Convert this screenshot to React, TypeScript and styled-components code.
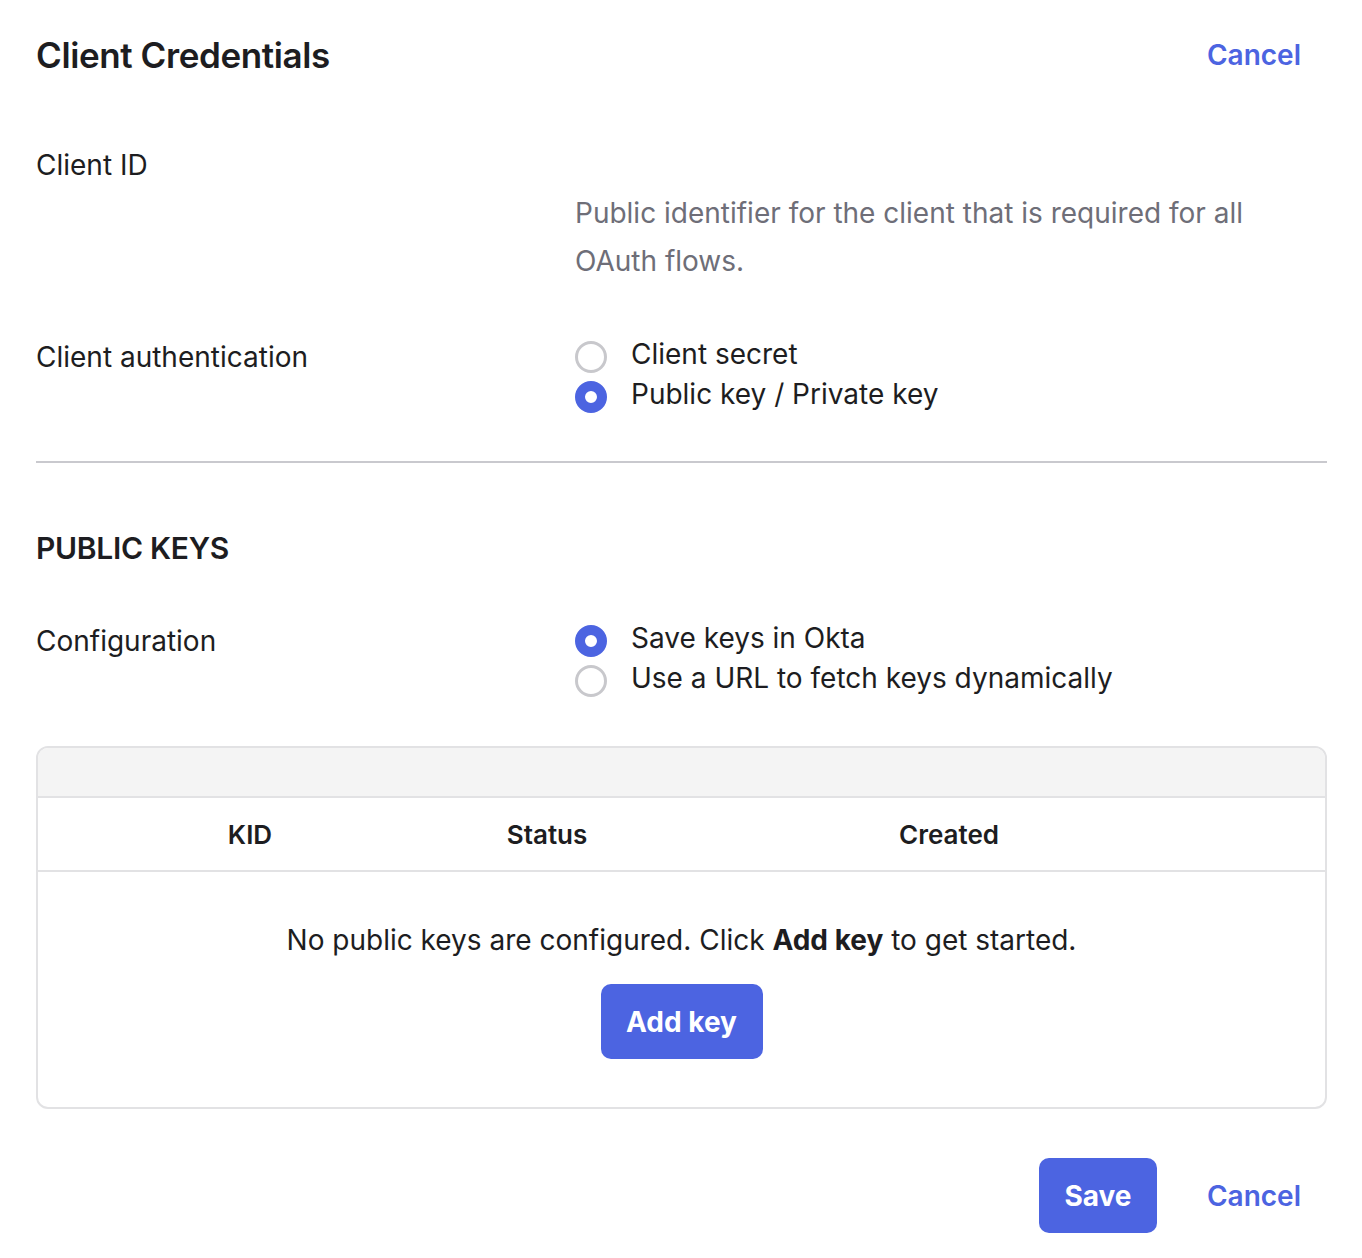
import React from 'react';
import styled, { createGlobalStyle } from 'styled-components';

const BLUE = '#4c64e1';
const TEXT = '#1d1d21';

const GlobalStyle = createGlobalStyle`
  body {
    margin: 0;
    background: #fff;
    font-family: Inter, "Noto Sans", sans-serif;
    color: ${TEXT};
  }
`;

const Page = styled.div`
  padding: 0 35px 0 36px;
`;

const Header = styled.div`
  display: flex;
  justify-content: space-between;
  align-items: center;
  height: 110px;
`;

const Title = styled.h1`
  margin: 0;
  font-size: 35px;
  font-weight: 600;
  letter-spacing: -0.4px;
`;

const LinkButton = styled.button`
  background: none;
  border: none;
  padding: 0 26px 0 0;
  font-family: inherit;
  font-size: 28px;
  font-weight: 600;
  color: ${BLUE};
  cursor: pointer;
`;

const Row = styled.div<{ $top?: number }>`
  display: grid;
  grid-template-columns: 539px 1fr;
  margin-top: ${(p) => p.$top ?? 0}px;
`;

const Label = styled.div`
  font-size: 28px;
  line-height: 48px;
`;

const Value = styled.div`
  height: 48px;
`;

const Help = styled.p`
  margin: 0;
  font-size: 28px;
  line-height: 48px;
  color: #6e6e78;
  max-width: 720px;
`;

const RadioGroup = styled.div`
  display: flex;
  flex-direction: column;
  padding-top: 1px;
`;

const RadioItem = styled.label`
  display: flex;
  align-items: center;
  gap: 24px;
  height: 40px;
  font-size: 28px;
`;

const Circle = styled.span<{ $checked?: boolean }>`
  box-sizing: border-box;
  width: 32px;
  height: 32px;
  margin-top: 5px;
  border-radius: 50%;
  flex-shrink: 0;
  border: ${(p) => (p.$checked ? `10px solid ${BLUE}` : '3px solid #c8c8cc')};
  background: #fff;
`;

const Divider = styled.hr`
  border: none;
  border-top: 2px solid #c9c9ce;
  margin: 47px 0 0;
`;

const SectionTitle = styled.h2`
  margin: 65px 0 0;
  font-size: 30px;
  font-weight: 600;
  line-height: 40px;
  letter-spacing: -0.3px;
`;

const Table = styled.div`
  margin-top: 48px;
  border: 2px solid #e2e2e4;
  border-radius: 12px;
  overflow: hidden;
`;

const TableTop = styled.div`
  height: 48px;
  background: #f4f4f4;
  border-bottom: 2px solid #e2e2e4;
`;

const HeadRow = styled.div`
  display: grid;
  grid-template-columns: 424px 170px 634px 1fr;
  height: 72px;
  align-items: center;
  border-bottom: 2px solid #e2e2e4;
`;

const HeadCell = styled.div`
  text-align: center;
  font-size: 26px;
  font-weight: 600;
`;

const Empty = styled.div`
  display: flex;
  flex-direction: column;
  align-items: center;
  padding: 50px 0 48px;
`;

const EmptyText = styled.p`
  margin: 0;
  font-size: 28px;
  line-height: 36px;
  b {
    font-weight: 700;
  }
`;

const PrimaryButton = styled.button<{ $width: number }>`
  width: ${(p) => p.$width}px;
  height: 75px;
  border: none;
  border-radius: 10px;
  background: ${BLUE};
  color: #fff;
  font-family: inherit;
  font-size: 28px;
  font-weight: 700;
  cursor: pointer;
`;

const AddWrap = styled.div`
  margin-top: 26px;
`;

const Footer = styled.div`
  display: flex;
  justify-content: flex-end;
  align-items: center;
  gap: 50px;
  margin-top: 49px;
`;

function Radio({ label, checked }: { label: string; checked?: boolean }) {
  return (
    <RadioItem>
      <Circle $checked={checked} />
      {label}
    </RadioItem>
  );
}

export default function App() {
  return (
    <>
      <GlobalStyle />
      <Page>
        <Header>
          <Title>Client Credentials</Title>
          <LinkButton>Cancel</LinkButton>
        </Header>

        <Row $top={31}>
          <Label>Client ID</Label>
          <div>
            <Value />
            <Help>Public identifier for the client that is required for all OAuth flows.</Help>
          </div>
        </Row>

        <Row $top={48}>
          <Label>Client authentication</Label>
          <RadioGroup>
            <Radio label="Client secret" />
            <Radio label="Public key / Private key" checked />
          </RadioGroup>
        </Row>

        <Divider />

        <SectionTitle>PUBLIC KEYS</SectionTitle>

        <Row $top={49}>
          <Label>Configuration</Label>
          <RadioGroup>
            <Radio label="Save keys in Okta" checked />
            <Radio label="Use a URL to fetch keys dynamically" />
          </RadioGroup>
        </Row>

        <Table>
          <TableTop />
          <HeadRow>
            <HeadCell>KID</HeadCell>
            <HeadCell>Status</HeadCell>
            <HeadCell>Created</HeadCell>
            <HeadCell />
          </HeadRow>
          <Empty>
            <EmptyText>
              No public keys are configured. Click <b>Add key</b> to get started.
            </EmptyText>
            <AddWrap>
              <PrimaryButton $width={162}>Add key</PrimaryButton>
            </AddWrap>
          </Empty>
        </Table>

        <Footer>
          <PrimaryButton $width={118}>Save</PrimaryButton>
          <LinkButton>Cancel</LinkButton>
        </Footer>
      </Page>
    </>
  );
}
